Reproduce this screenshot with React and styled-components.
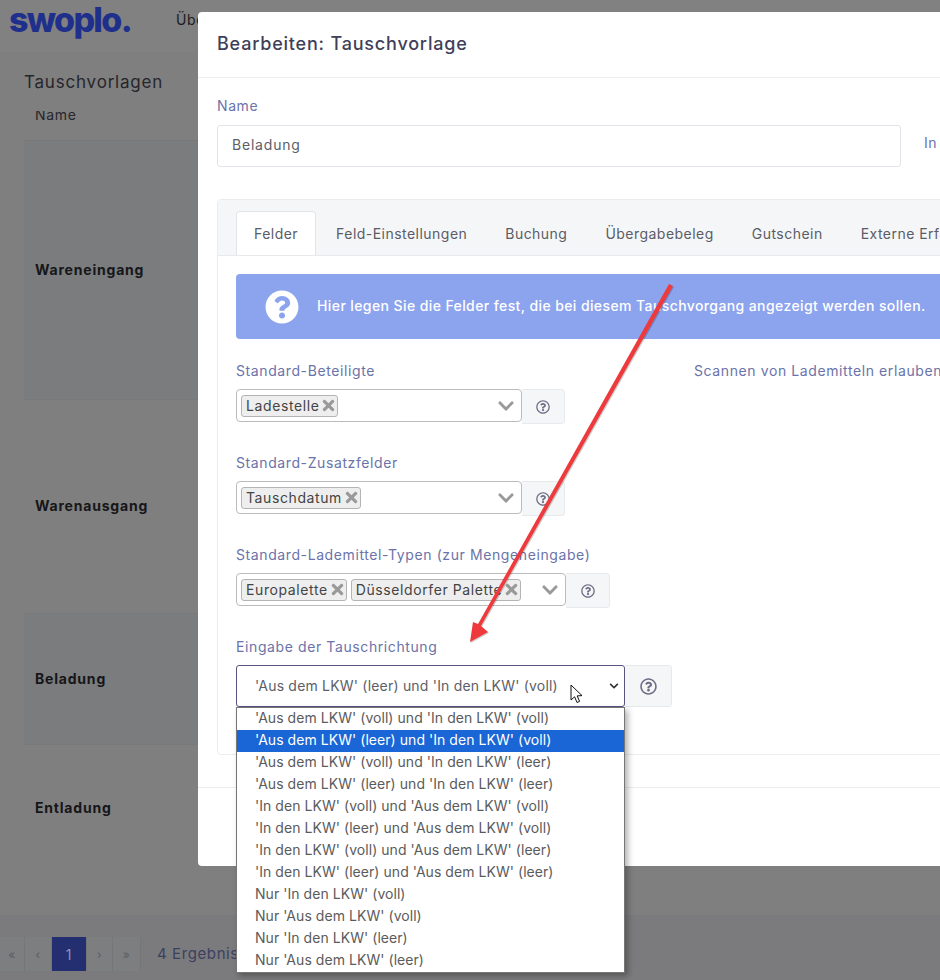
import React from "react";
import styled, { createGlobalStyle } from "styled-components";
import { FaChevronDown, FaQuestionCircle, FaRegQuestionCircle, FaTimes } from "react-icons/fa";

const GlobalStyle = createGlobalStyle`
  html, body {
    margin: 0;
    padding: 0;
    background: #7f7f7f;
  }
  * {
    box-sizing: border-box;
  }
  body {
    font-family: "Inter", "Open Sans", sans-serif;
    font-size: 14px;
    letter-spacing: 0.6px;
  }
`;

const TABS = ["Felder", "Feld-Einstellungen", "Buchung", "Übergabebeleg", "Gutschein", "Externe Erfassung"];

const ROWS = [
  { name: "Wareneingang", height: 259, striped: true },
  { name: "Warenausgang", height: 214 },
  { name: "Beladung", height: 131, striped: true },
  { name: "Entladung", height: 126 },
];

const OPTIONS = [
  "'Aus dem LKW' (voll) und 'In den LKW' (voll)",
  "'Aus dem LKW' (leer) und 'In den LKW' (voll)",
  "'Aus dem LKW' (voll) und 'In den LKW' (leer)",
  "'Aus dem LKW' (leer) und 'In den LKW' (leer)",
  "'In den LKW' (voll) und 'Aus dem LKW' (voll)",
  "'In den LKW' (leer) und 'Aus dem LKW' (voll)",
  "'In den LKW' (voll) und 'Aus dem LKW' (leer)",
  "'In den LKW' (leer) und 'Aus dem LKW' (leer)",
  "Nur 'In den LKW' (voll)",
  "Nur 'Aus dem LKW' (voll)",
  "Nur 'In den LKW' (leer)",
  "Nur 'Aus dem LKW' (leer)",
];

const TagSelect = ({ tags, width, addonWidth }) => (
  <InputGroup>
    <SelectBox $width={width}>
      {tags.map((tag) => (
        <Tag key={tag}>
          {tag}
          <FaTimes size={17} color="#999" />
        </Tag>
      ))}
      <Chevron>
        <FaChevronDown size={18} color="#999" />
      </Chevron>
    </SelectBox>
    <Addon $width={addonWidth} $height={35}>
      <FaRegQuestionCircle size={14} color="#6d6f86" />
    </Addon>
  </InputGroup>
);

const App = () => {
  return (
    <Page>
      <GlobalStyle />
      <TopBar>
        <Logo>swoplo.</Logo>
        <NavItem>Übersicht</NavItem>
      </TopBar>
      <Main>
        <PageTitle>Tauschvorlagen</PageTitle>
        <TableHead>Name</TableHead>
        {ROWS.map((row) => (
          <Row key={row.name} $height={row.height} $striped={row.striped}>
            {row.name}
          </Row>
        ))}
      </Main>
      <Footer>
        <Pagination>
          <PageButton $width={25}>«</PageButton>
          <PageButton $width={27}>‹</PageButton>
          <PageButton $width={35} $active>1</PageButton>
          <PageButton $width={26}>›</PageButton>
          <PageButton $width={28}>»</PageButton>
        </Pagination>
        <ResultCount>4 Ergebnisse</ResultCount>
      </Footer>

      <Modal>
        <ModalHeader>Bearbeiten: Tauschvorlage</ModalHeader>
        <ModalBody>
          <NameRow>
            <div>
              <Label>Name</Label>
              <TextInput>Beladung</TextInput>
            </div>
            <SideLabel>In Verwendung</SideLabel>
          </NameRow>
          <Card>
            <TabBar>
              {TABS.map((tab, i) => (
                <Tab key={tab} $active={i === 0}>{tab}</Tab>
              ))}
            </TabBar>
            <CardBody>
              <Alert>
                <FaQuestionCircle size={34} color="#fff" />
                <AlertText>
                  Hier legen Sie die Felder fest, die bei diesem Tauschvorgang angezeigt werden sollen.
                </AlertText>
              </Alert>
              <FormGrid>
                <FieldColumn>
                  <div>
                    <FieldLabel>Standard-Beteiligte</FieldLabel>
                    <TagSelect tags={["Ladestelle"]} width={286} addonWidth={43} />
                  </div>
                  <div>
                    <FieldLabel>Standard-Zusatzfelder</FieldLabel>
                    <TagSelect tags={["Tauschdatum"]} width={286} addonWidth={43} />
                  </div>
                  <div>
                    <FieldLabel>Standard-Lademittel-Typen (zur Mengeneingabe)</FieldLabel>
                    <TagSelect tags={["Europalette", "Düsseldorfer Palette"]} width={330} addonWidth={44} />
                  </div>
                  <div>
                    <FieldLabel>Eingabe der Tauschrichtung</FieldLabel>
                    <InputGroup>
                      <NativeSelect>
                        <SelectValue>{OPTIONS[1]}</SelectValue>
                        <FaChevronDown size={10} color="#333" />
                        <Dropdown>
                          {OPTIONS.map((option, i) => (
                            <Option key={option} $selected={i === 1}>{option}</Option>
                          ))}
                        </Dropdown>
                      </NativeSelect>
                      <Addon $width={47} $height={42}>
                        <FaRegQuestionCircle size={17} color="#6d6f86" />
                      </Addon>
                    </InputGroup>
                  </div>
                </FieldColumn>
                <FieldLabel>Scannen von Lademitteln erlauben</FieldLabel>
              </FormGrid>
            </CardBody>
          </Card>
        </ModalBody>
        <ModalFooter />
      </Modal>

      <Annotation viewBox="0 0 940 980">
        <path d="M669 284L673 286L481 626L488 632L470 642L473 622L478 624Z" fill="#ee3a3d" />
      </Annotation>
      <Cursor viewBox="0 0 14 22">
        <path
          d="M1 1L1 16L4.6 12.8L7 18.5L9.6 17.4L7.2 11.9L12 11.6Z"
          fill="#fff"
          stroke="#111"
          strokeWidth="1"
        />
      </Cursor>
    </Page>
  );
};

export default App;

const Page = styled.div`
  position: relative;
  display: flex;
  flex-direction: column;
  width: 940px;
  height: 980px;
  overflow: hidden;
  background: #7f7f7f;
`;

const TopBar = styled.header`
  display: flex;
  align-items: flex-start;
  height: 52px;
  background: #818181;
  flex-shrink: 0;
`;

const Logo = styled.div`
  width: 176px;
  padding-left: 9px;
  font-size: 34px;
  line-height: 40px;
  font-weight: 800;
  letter-spacing: -1.7px;
  color: #1f2f8c;
`;

const NavItem = styled.div`
  margin-top: 10px;
  font-size: 14px;
  line-height: 20px;
  color: #1c1c20;
`;

const Main = styled.main`
  flex: 1;
  padding: 18px 0 0 24px;
`;

const PageTitle = styled.h1`
  margin: 0 0 17px;
  font-size: 17px;
  line-height: 24px;
  font-weight: 400;
  letter-spacing: 0.8px;
  color: #26262b;
`;

const TableHead = styled.div`
  height: 30px;
  padding-left: 11px;
  overflow: hidden;
  line-height: 8px;
  letter-spacing: 0.7px;
  color: #26262b;
  border-bottom: 1px solid #77787a;
`;

const Row = styled.div`
  display: flex;
  align-items: center;
  height: ${(p) => p.$height}px;
  padding: 0 0 2px 11px;
  font-weight: 700;
  letter-spacing: 0.8px;
  color: #161619;
  background: ${(p) => (p.$striped ? "#7b7c7e" : "transparent")};
  border-bottom: 1px solid #78797b;

  &:last-child {
    border-bottom: 0;
  }
`;

const Footer = styled.footer`
  display: flex;
  align-items: flex-start;
  gap: 16px;
  height: 65px;
  padding-top: 22px;
  background: #7b7b7d;
  flex-shrink: 0;
`;

const Pagination = styled.div`
  display: flex;
`;

const PageButton = styled.div`
  display: flex;
  align-items: center;
  justify-content: center;
  width: ${(p) => p.$width}px;
  height: 34px;
  font-size: ${(p) => (p.$active ? "14px" : "12px")};
  color: ${(p) => (p.$active ? "#8d93b3" : "#5c5d60")};
  background: ${(p) => (p.$active ? "#232f70" : "#7d7e80")};
  border-right: 1px solid #757678;
`;

const ResultCount = styled.div`
  line-height: 34px;
  font-size: 15px;
  color: #3c4060;
`;

const Modal = styled.div`
  position: absolute;
  top: 12px;
  left: 198px;
  width: 1000px;
  background: #fff;
  border-radius: 4px;
`;

const ModalHeader = styled.div`
  height: 66px;
  padding: 0 19px;
  font-size: 18px;
  line-height: 64px;
  font-weight: 500;
  letter-spacing: 0.8px;
  color: #3f3f5a;
  border-bottom: 1px solid #ebecef;
`;

const ModalBody = styled.div`
  padding: 19px 19px 32px;
  border-bottom: 1px solid #ebecef;
`;

const ModalFooter = styled.div`
  height: 78px;
`;

const NameRow = styled.div`
  display: grid;
  grid-template-columns: 684px 1fr;
  gap: 23px;
  margin-bottom: 32px;
`;

const Label = styled.div`
  margin-bottom: 10px;
  line-height: 18px;
  color: #6a73aa;
`;

const SideLabel = styled.div`
  margin-top: 37px;
  line-height: 18px;
  white-space: nowrap;
  color: #6a73aa;
`;

const TextInput = styled.div`
  height: 42px;
  padding-left: 14px;
  line-height: 38px;
  letter-spacing: 0.8px;
  color: #5d5e68;
  border: 1px solid #e3e4ea;
  border-radius: 3px;
`;

const Card = styled.div`
  border: 1px solid #ebecef;
  border-radius: 4px;
`;

const TabBar = styled.div`
  display: flex;
  height: 56px;
  padding: 11px 0 0 18px;
  overflow: hidden;
  white-space: nowrap;
  background: #f5f6f8;
  border-bottom: 1px solid #e8e9ed;
`;

const Tab = styled.div`
  height: 45px;
  margin-right: 2px;
  padding: 0 17px;
  line-height: 43px;
  letter-spacing: 0.47px;
  color: #5b5c66;
  border: 1px solid ${(p) => (p.$active ? "#e3e4ea" : "transparent")};
  border-bottom: 0;
  border-radius: 4px 4px 0 0;
  background: ${(p) => (p.$active ? "#fff" : "transparent")};
`;

const CardBody = styled.div`
  padding: 18px 18px 47px;
`;

const Alert = styled.div`
  display: flex;
  align-items: center;
  gap: 18px;
  height: 65px;
  margin-bottom: 23px;
  padding-left: 29px;
  background: #8ca3ee;
  border-radius: 4px;
`;

const AlertText = styled.span`
  padding-bottom: 2px;
  font-weight: 500;
  letter-spacing: 0.4px;
  white-space: nowrap;
  color: #fff;
`;

const FormGrid = styled.div`
  display: grid;
  grid-template-columns: 440px 1fr;
  gap: 18px;
`;

const FieldColumn = styled.div`
  display: flex;
  flex-direction: column;
  gap: 30px;
`;

const FieldLabel = styled.div`
  margin-bottom: 9px;
  line-height: 18px;
  white-space: nowrap;
  color: #6a73aa;
`;

const InputGroup = styled.div`
  display: flex;
  align-items: flex-start;
`;

const SelectBox = styled.div`
  display: flex;
  align-items: center;
  gap: 4px;
  width: ${(p) => p.$width}px;
  height: 33px;
  padding-left: 4px;
  background: #fff;
  border: 1px solid #bbb;
  border-radius: 4px;
`;

const Tag = styled.span`
  display: inline-flex;
  align-items: center;
  gap: 1px;
  height: 22px;
  padding: 0 0 0 4px;
  white-space: nowrap;
  letter-spacing: 0.6px;
  color: #444;
  background: #eee;
  border: 1px solid #b4b4b4;
  border-radius: 3px;
`;

const Chevron = styled.span`
  display: flex;
  margin-left: auto;
  padding-right: 6px;
`;

const Addon = styled.div`
  display: flex;
  align-items: center;
  justify-content: center;
  width: ${(p) => p.$width}px;
  height: ${(p) => p.$height}px;
  background: #f5f6f8;
  border: 1px solid #e8e9ed;
  border-left: 0;
  border-radius: 0 4px 4px 0;
`;

const NativeSelect = styled.div`
  position: relative;
  display: flex;
  align-items: center;
  justify-content: space-between;
  width: 389px;
  height: 42px;
  padding: 0 5px 0 18px;
  color: #5d5e68;
  background: #fff;
  border: 1px solid #57557f;
  border-radius: 3px;
`;

const SelectValue = styled.span`
  padding-bottom: 2px;
  letter-spacing: 0.2px;
`;

const Dropdown = styled.div`
  position: absolute;
  top: 41px;
  left: -1px;
  z-index: 2;
  width: 389px;
  background: #fff;
  border: 1px solid #767676;
  box-shadow: 3px 3px 6px rgba(0, 0, 0, 0.3);
`;

const Option = styled.div`
  height: 22px;
  padding-left: 18px;
  line-height: 20px;
  letter-spacing: 0.05px;
  white-space: nowrap;
  color: ${(p) => (p.$selected ? "#fff" : "#5b5b5b")};
  background: ${(p) => (p.$selected ? "#1a66d6" : "transparent")};
`;

const Annotation = styled.svg`
  position: absolute;
  top: 0;
  left: 0;
  z-index: 3;
  width: 940px;
  height: 980px;
  pointer-events: none;
  filter: drop-shadow(1px 1px 0.5px rgba(0, 0, 0, 0.2));
`;

const Cursor = styled.svg`
  position: absolute;
  top: 684px;
  left: 570px;
  z-index: 4;
  width: 14px;
  height: 22px;
`;
